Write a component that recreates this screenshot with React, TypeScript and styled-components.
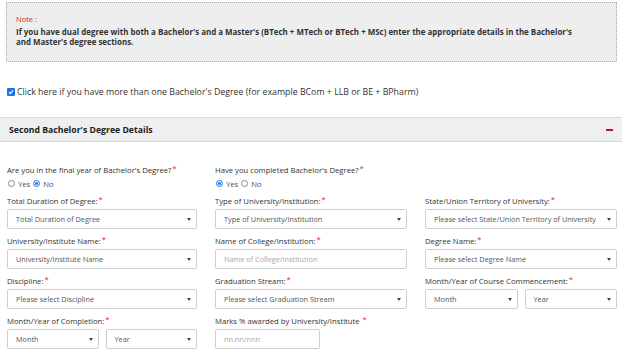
import React from "react";
import styled, { createGlobalStyle } from "styled-components";

const Global = createGlobalStyle`
  html, body { margin: 0; padding: 0; background: #fff; }
  body { font-family: "Open Sans", "Noto Sans", Arial, sans-serif; color: #333; }
  * { box-sizing: border-box; }
`;

const Page = styled.div`
  width: 622px;
  height: 354px;
  overflow: hidden;
`;

const NoteBox = styled.div`
  margin: 2px 5px 0 6px;
  height: 60px;
  border: 1px dotted #a8a8a8;
  background: #eeeeee;
  padding: 11px 9px 0 9px;
`;

const NoteTitle = styled.div`
  color: #e2231a;
  font-size: 7.5px;
  line-height: 10px;
  margin-bottom: 3px;
`;

const NoteText = styled.div`
  font-size: 7.95px;
  line-height: 10px;
  font-weight: 700;
  color: #333;
  padding-right: 30px;
`;

const CheckRow = styled.label`
  display: flex;
  align-items: center;
  gap: 2px;
  margin: 23px 0 0 7px;
  font-size: 8.8px;
  line-height: 14px;
  color: #333;
`;

const CheckBox = styled.span`
  width: 8px;
  height: 8px;
  border-radius: 1px;
  background: #1a73e8;
  display: inline-flex;
  align-items: center;
  justify-content: center;
`;

const SectionHeader = styled.div`
  margin-top: 18px;
  height: 25px;
  background: #efefef;
  border-top: 1px solid #d8d8d8;
  border-bottom: 1px solid #d8d8d8;
  display: flex;
  align-items: center;
  justify-content: space-between;
  padding: 0 9px 0 9px;
  font-size: 8.7px;
  font-weight: 700;
  color: #222;
`;

const Minus = styled.span`
  width: 7px;
  height: 2px;
  background: #b3163d;
  display: block;
`;

const Form = styled.div`
  display: grid;
  grid-template-columns: 190px 192px 192px;
  column-gap: 18px;
  row-gap: 6px;
  padding: 22px 0 0 7px;
`;

const Field = styled.div`
  display: flex;
  flex-direction: column;
`;

const Label = styled.div`
  font-size: 7.7px;
  line-height: 12px;
  color: #333;
  white-space: nowrap;
  margin-bottom: 2px;
`;

const Req = styled.span`
  color: #e2231a;
  position: relative;
  top: -2px;
  margin-left: 1px;
`;

const RadioRow = styled.div`
  display: flex;
  align-items: center;
  height: 11px;
  font-size: 7.7px;
  color: #555;
`;

const Radio = styled.span<{ $on?: boolean }>`
  width: 7px;
  height: 7px;
  border-radius: 50%;
  border: 1px solid ${(p) => (p.$on ? "#1a73e8" : "#888")};
  background: #fff;
  display: inline-flex;
  align-items: center;
  justify-content: center;
  margin: 0 3px 0 1px;
  & ~ & {
    margin-left: 3px;
  }
  &::after {
    content: "";
    width: 3px;
    height: 3px;
    border-radius: 50%;
    background: ${(p) => (p.$on ? "#1a73e8" : "transparent")};
  }
`;

const Pair = styled.div`
  display: grid;
  grid-template-columns: 1fr 1fr;
  column-gap: 7px;
`;

const SelectBox = styled.div<{ $w?: number }>`
  height: 20px;
  width: ${(p) => (p.$w ? `${p.$w}px` : "100%")};
  border: 1px solid #cfcfcf;
  border-radius: 2px;
  background: #fff;
  display: flex;
  align-items: center;
  justify-content: space-between;
  padding: 0 5px 0 8px;
  font-size: 7.3px;
  color: #555;
  white-space: nowrap;
  overflow: hidden;
`;

const Caret = styled.span`
  width: 0;
  height: 0;
  border-left: 2px solid transparent;
  border-right: 2px solid transparent;
  border-top: 3px solid #444;
  flex-shrink: 0;
  margin-left: 3px;
`;

const Input = styled.div<{ $w?: number }>`
  height: 20px;
  width: ${(p) => (p.$w ? `${p.$w}px` : "100%")};
  border: 1px solid #cfcfcf;
  border-radius: 2px;
  background: #fff;
  display: flex;
  align-items: center;
  padding: 0 8px;
  font-size: 7.3px;
  color: #a8a8a8;
  white-space: nowrap;
`;

const Empty = styled.div``;

const Select = ({ text, w }: { text: string; w?: number }) => (
  <SelectBox $w={w}>
    <span>{text}</span>
    <Caret />
  </SelectBox>
);

const L = ({ children }: { children: React.ReactNode }) => (
  <Label>
    {children}
    <Req>*</Req>
  </Label>
);

export default function App() {
  return (
    <Page>
      <Global />
      <NoteBox>
        <NoteTitle>Note :</NoteTitle>
        <NoteText>
          If you have dual degree with both a Bachelor's and a Master's (BTech + MTech or BTech + MSc) enter the appropriate details in the Bachelor's and Master's degree sections.
        </NoteText>
      </NoteBox>
      <CheckRow>
        <CheckBox>
          <svg width="6" height="6" viewBox="0 0 6 6">
            <path d="M1 3.2 L2.4 4.6 L5 1.4" stroke="#fff" strokeWidth="1.1" fill="none" />
          </svg>
        </CheckBox>
        Click here if you have more than one Bachelor's Degree (for example BCom + LLB or BE + BPharm)
      </CheckRow>
      <SectionHeader>
        <span>Second Bachelor's Degree Details</span>
        <Minus />
      </SectionHeader>
      <Form>
        <Field>
          <L>Are you in the final year of Bachelor's Degree?</L>
          <RadioRow>
            <Radio />Yes<Radio $on />No
          </RadioRow>
        </Field>
        <Field>
          <L>Have you completed Bachelor's Degree?</L>
          <RadioRow>
            <Radio $on />Yes<Radio />No
          </RadioRow>
        </Field>
        <Empty />

        <Field>
          <L>Total Duration of Degree:</L>
          <Select text="Total Duration of Degree" />
        </Field>
        <Field>
          <L>Type of University/Institution:</L>
          <Select text="Type of University/Institution" />
        </Field>
        <Field>
          <L>State/Union Territory of University:</L>
          <Select text="Please select State/Union Territory of University" />
        </Field>

        <Field>
          <L>University/Institute Name:</L>
          <Select text="University/Institute Name" />
        </Field>
        <Field>
          <L>Name of College/Institution:</L>
          <Input>Name of College/Institution</Input>
        </Field>
        <Field>
          <L>Degree Name:</L>
          <Select text="Please select Degree Name" />
        </Field>

        <Field>
          <L>Discipline:</L>
          <Select text="Please select Discipline" />
        </Field>
        <Field>
          <L>Graduation Stream:</L>
          <Select text="Please select Graduation Stream" />
        </Field>
        <Field>
          <L>Month/Year of Course Commencement:</L>
          <Pair>
            <Select text="Month" />
            <Select text="Year" />
          </Pair>
        </Field>

        <Field>
          <L>Month/Year of Completion:</L>
          <Pair>
            <Select text="Month" />
            <Select text="Year" />
          </Pair>
        </Field>
        <Field>
          <Label>
            Marks % awarded by University/Institute <Req>*</Req>
          </Label>
          <Input $w={105}>nn.nn/nnn</Input>
        </Field>
        <Empty />
      </Form>
    </Page>
  );
}
